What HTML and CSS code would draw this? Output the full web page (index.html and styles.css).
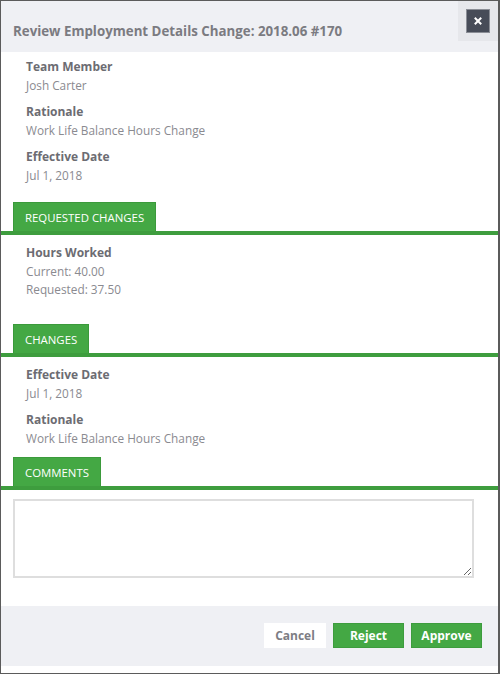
FILE: index.html
```html
<!DOCTYPE html>
<html>
<head>
<meta charset="utf-8">
<link rel="stylesheet" href="styles.css">
</head>
<body>
<div class="modal">
  <div class="header">
    <div class="title">Review Employment Details Change: 2018.06 #170</div>
    <div class="close-wrap">
      <button class="close" aria-label="Close">
        <svg width="10" height="10" viewBox="0 0 10 10"><path d="M2.5 2.5 L7.5 7.5 M7.5 2.5 L2.5 7.5" stroke="#ffffff" stroke-width="2" stroke-linecap="square"/></svg>
      </button>
    </div>
  </div>
  <div class="content">
    <div class="group first">
      <div class="field"><div class="label">Team Member</div><div class="value">Josh Carter</div></div>
      <div class="field"><div class="label">Rationale</div><div class="value">Work Life Balance Hours Change</div></div>
      <div class="field"><div class="label">Effective Date</div><div class="value">Jul 1, 2018</div></div>
    </div>
    <div class="section-head s1"><div class="tab">REQUESTED CHANGES</div></div>
    <div class="group">
      <div class="field"><div class="label">Hours Worked</div><div class="value">Current: 40.00</div><div class="value">Requested: 37.50</div></div>
    </div>
    <div class="section-head s2"><div class="tab">CHANGES</div></div>
    <div class="group">
      <div class="field"><div class="label">Effective Date</div><div class="value">Jul 1, 2018</div></div>
      <div class="field"><div class="label">Rationale</div><div class="value">Work Life Balance Hours Change</div></div>
    </div>
    <div class="section-head s3"><div class="tab">COMMENTS</div></div>
    <div class="comment-wrap"><textarea class="comment"></textarea></div>
  </div>
  <div class="footer">
    <button class="btn cancel">Cancel</button>
    <button class="btn green">Reject</button>
    <button class="btn green">Approve</button>
  </div>
  <div class="bottom"></div>
</div>
</body>
</html>
```
FILE: styles.css
```css
html, body {
  margin: 0;
  padding: 0;
}
body {
  background: #5b5b5b;
  width: 500px;
  height: 674px;
  font-family: "Open Sans", "Liberation Sans", sans-serif;
}
.modal {
  margin: 1px 2px 0 1px;
  width: 497px;
  height: 672px;
  background: #ffffff;
  display: flex;
  flex-direction: column;
}
.header {
  height: 51px;
  background: #eff0f4;
  display: flex;
  justify-content: space-between;
  align-items: flex-start;
}
.title {
  margin-top: 21px;
  margin-left: 12px;
  font-size: 13.3px;
  line-height: 18px;
  font-weight: 700;
  color: #7b7b81;
}
.close-wrap {
  width: 40px;
  height: 40px;
  background: #e6e7eb;
  display: flex;
  align-items: center;
  justify-content: center;
}
.close {
  width: 24px;
  height: 24px;
  background: #474c58;
  border: 1px solid #8a8d95;
  padding: 0;
  display: flex;
  align-items: center;
  justify-content: center;
}
.close svg {
  display: block;
}
.content {
  flex: 1;
}
.group {
  padding: 9px 0 0 25px;
}
.group.first {
  padding-top: 6px;
}
.field + .field {
  margin-top: 9px;
}
.label {
  font-size: 12px;
  line-height: 18px;
  font-weight: 700;
  color: #6c6c72;
}
.value {
  font-size: 11.8px;
  line-height: 18px;
  color: #8a8a90;
}
.section-head {
  border-bottom: 4px solid #3e9d3e;
  display: flex;
}
.s1 { margin-top: 18px; }
.s2 { margin-top: 26px; }
.s3 { margin-top: 10px; }
.tab {
  margin-left: 12px;
  height: 29px;
  box-sizing: border-box;
  padding: 0 11px;
  background: #44a844;
  border: 1px solid #3b9a3b;
  border-bottom: none;
  color: #ffffff;
  font-size: 11.4px;
  line-height: 29px;
}
.comment-wrap {
  padding: 9px 0 0 12px;
}
.comment {
  display: block;
  width: 461px;
  height: 79px;
  box-sizing: border-box;
  border: 2px solid #dedede;
  resize: vertical;
  margin: 0;
}
.footer {
  height: 60px;
  background: #eff0f4;
  display: flex;
  justify-content: flex-end;
  align-items: flex-start;
  padding-right: 16px;
  box-sizing: border-box;
  gap: 6px;
}
.btn {
  margin-top: 17px;
  height: 25px;
  font-family: "Open Sans", "Liberation Sans", sans-serif;
  font-size: 12px;
  font-weight: 700;
  border: 1px solid transparent;
  padding: 0;
  line-height: 23px;
}
.cancel {
  width: 62px;
  background: #ffffff;
  color: #7d7d84;
}
.green {
  width: 71px;
  background: #44a844;
  border-color: #3d9c3d;
  color: #ffffff;
  margin-left: 1px;
}
.bottom {
  height: 7px;
  background: #ffffff;
}
```
